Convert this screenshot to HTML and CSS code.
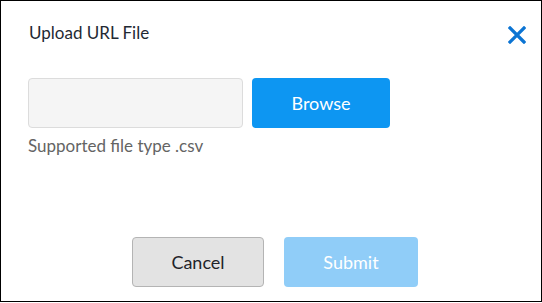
FILE: index.html
```html
<!DOCTYPE html>
<html>
<head>
<meta charset="utf-8">
<link rel="stylesheet" href="styles.css">
</head>
<body>
<div class="dialog">
  <div class="header">
    <div class="title">Upload URL File</div>
    <svg class="close" width="18" height="18" viewBox="0 0 18 18">
      <path d="M2 2 L16 16 M16 2 L2 16" stroke="#0b74d3" stroke-width="3.2" stroke-linecap="square" fill="none"/>
    </svg>
  </div>
  <div class="row">
    <div class="input"></div>
    <div class="btn browse">Browse</div>
  </div>
  <div class="hint">Supported file type .csv</div>
  <div class="footer">
    <div class="btn cancel">Cancel</div>
    <div class="btn submit">Submit</div>
  </div>
</div>
</body>
</html>
```
FILE: styles.css
```css
html, body {
  margin: 0;
  padding: 0;
  background: #fff;
}
body {
  font-family: Lato, "Liberation Sans", sans-serif;
}
.dialog {
  box-sizing: border-box;
  width: 542px;
  height: 302px;
  border: 1px solid #000;
  display: flex;
  flex-direction: column;
  padding: 0 15px 14px 27px;
}
.header {
  display: flex;
  justify-content: space-between;
  align-items: center;
  padding-top: 20px;
  height: 24px;
}
.title {
  font-size: 17px;
  line-height: 22px;
  color: #1f2933;
  padding-left: 1px;
}
.close {
  display: block;
  margin-top: 4px;
}
.row {
  display: flex;
  gap: 9px;
  margin-top: 33px;
}
.input {
  box-sizing: border-box;
  width: 215px;
  height: 50px;
  background: #f5f5f5;
  border: 1px solid #dcdcdc;
  border-radius: 4px;
}
.btn {
  box-sizing: border-box;
  height: 50px;
  border-radius: 4px;
  display: flex;
  align-items: center;
  justify-content: center;
  font-size: 18px;
}
.browse {
  width: 138px;
  background: #0d96f2;
  color: #fff;
}
.hint {
  margin-top: 7px;
  font-size: 17px;
  line-height: 22px;
  color: #646464;
}
.footer {
  margin-top: auto;
  display: flex;
  gap: 20px;
  padding-left: 104px;
}
.cancel {
  width: 132px;
  background: #e3e3e3;
  border: 1px solid #b4b4b4;
  color: #1f2329;
}
.submit {
  width: 134px;
  background: #90cdf8;
  color: #fff;
}
```
